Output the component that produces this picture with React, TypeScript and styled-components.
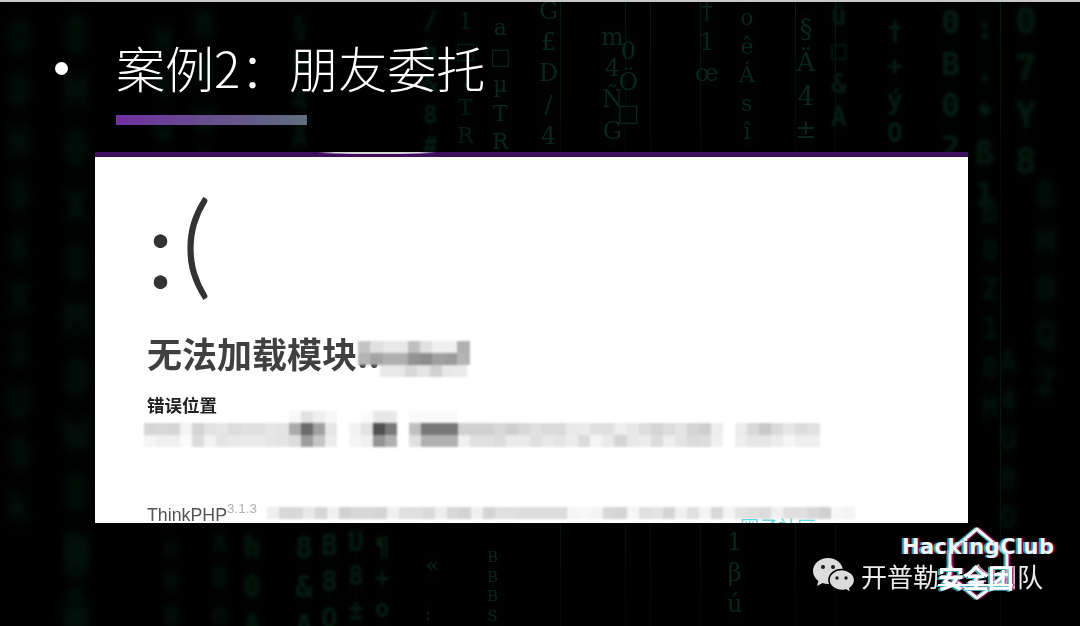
import styled, { createGlobalStyle } from 'styled-components';

const GlobalStyle = createGlobalStyle`
  html, body {
    margin: 0;
    padding: 0;
    background: #000;
  }
`;

const CJK = `"Noto Sans CJK SC", "Noto Sans", sans-serif`;

const Slide = styled.div`
  position: relative;
  width: 1080px;
  height: 626px;
  box-sizing: border-box;
  border-top: 2px solid #c9c9c9;
  background: #000;
  overflow: hidden;
  font-family: ${CJK};
`;

const MatrixLayer = styled.div`
  position: absolute;
  inset: 0;
  overflow: hidden;
`;

const MatrixColumn = styled.div<{ $x: number; $y: number; $size: number; $blur: number; $color: string }>`
  position: absolute;
  left: ${(p) => p.$x}px;
  top: ${(p) => p.$y}px;
  padding: 0 3px;
  font-family: ${(p) => (p.$blur > 0.6 ? '"DejaVu Sans Mono"' : '"DejaVu Serif"')}, monospace;
  font-weight: ${(p) => (p.$blur > 0.6 ? 700 : 400)};
  font-size: ${(p) => p.$size}px;
  line-height: 1.3;
  text-align: center;
  color: ${(p) => p.$color};
  filter: blur(${(p) => p.$blur}px);
  background: linear-gradient(90deg, transparent, rgba(0, 60, 30, 0.05), transparent);
`;

const MatrixGlyph = styled.div`
  display: block;
`;

const Content = styled.div`
  position: relative;
  display: flex;
  flex-direction: column;
`;

const Heading = styled.div`
  display: flex;
  align-items: center;
  margin: 35px 0 0 55px;
  height: 60px;
`;

const Bullet = styled.span`
  width: 13px;
  height: 13px;
  margin: 2px 48px 0 0;
  border-radius: 50%;
  background: #fff;
`;

const Title = styled.h1`
  margin: 0;
  font-size: 49px;
  line-height: 60px;
  font-weight: 300;
  color: #fff;
  white-space: nowrap;
`;

const AccentBar = styled.div`
  width: 191px;
  height: 10px;
  margin: 18px 0 0 116px;
  background: linear-gradient(90deg, #7030a0, #5f6e7e);
`;

const Panel = styled.section`
  position: relative;
  width: 873px;
  height: 371px;
  margin: 27px 0 0 95px;
  background: #fff;
  overflow: hidden;
`;

const PanelTopBar = styled.div`
  position: relative;
  height: 5px;
  background: #3f0e5f;

  &::after {
    content: '';
    position: absolute;
    left: 222px;
    top: -1px;
    width: 120px;
    height: 3px;
    border-radius: 50%;
    background: linear-gradient(90deg, transparent, #d9d3dc 15%, #d9d3dc 85%, transparent);
  }
`;

const PanelBody = styled.div`
  position: relative;
  padding-left: 52px;
`;

const Face = styled.div`
  display: flex;
  margin-top: 16px;
  height: 132px;
  font-family: Lato, "Liberation Sans", sans-serif;
  font-size: 108px;
  line-height: 132px;
  color: #333;
`;

const FaceEyes = styled.span`
  margin-top: 7px;
`;

const FaceMouth = styled.span`
  margin: 2px 0 0 8px;
  font-size: 112px;
  font-weight: 300;
  -webkit-text-stroke: 1.5px #333;
`;

const ErrorTitle = styled.h2`
  position: relative;
  width: max-content;
  margin: 22px 0 0;
  font-size: 35px;
  line-height: 52px;
  font-weight: 700;
  color: #404040;
  filter: blur(0.4px);
`;

const Redaction = styled.div<{ $left: number; $top: number }>`
  position: absolute;
  left: ${(p) => p.$left}px;
  top: ${(p) => p.$top}px;
  filter: blur(0.9px);
`;

const MosaicRow = styled.div<{ $indent?: number }>`
  display: flex;
  margin-left: ${(p) => p.$indent ?? 0}px;
`;

const MosaicCell = styled.span<{ $w: number; $h: number }>`
  flex: none;
  width: ${(p) => p.$w}px;
  height: ${(p) => p.$h}px;
`;

const LocationLabel = styled.h3`
  margin: 14px 0 0;
  font-size: 17.5px;
  line-height: 24px;
  font-weight: 700;
  color: #222;
  filter: blur(0.3px);
`;

const LocationBlur = styled.div`
  margin: -6px 0 0 -3px;
  filter: blur(0.9px);
`;

const Footer = styled.div`
  position: relative;
  display: flex;
  align-items: flex-start;
  margin-top: 60px;
`;

const Brand = styled.span`
  font-family: "Liberation Sans", Arial, sans-serif;
  font-size: 17.8px;
  line-height: 26px;
  color: #555;
  white-space: nowrap;
  margin-top: -5px;
  filter: blur(0.3px);
`;

const Version = styled.sup`
  font-size: 13.500px;
  line-height: 0;
  color: #b0b0b0;
  vertical-align: 8px;
`;

const FooterBlur = styled.div`
  margin: 0 0 0 10px;
  filter: blur(0.9px);
`;

const FooterLink = styled.a`
  position: absolute;
  left: 593px;
  top: 8px;
  display: flex;
  align-items: flex-start;
  gap: 8px;
  font-size: 19px;
  line-height: 24px;
  color: #62d7e2;
  white-space: nowrap;
`;

const LinkTail = styled.span`
  width: 88px;
  margin-top: 9px;
  border-top: 2px dotted #b5ecf0;
`;

const Watermark = styled.div`
  position: absolute;
  left: 813px;
  top: 555px;
  display: flex;
  align-items: center;
  gap: 6px;
`;

const WatermarkText = styled.span`
  font-size: 26px;
  line-height: 38px;
  color: #ebebeb;
  white-space: nowrap;
  filter: blur(0.3px);
`;

const LogoMark = styled.svg`
  position: absolute;
  left: 940px;
  top: 522px;
`;

const LogoName = styled.span`
  position: absolute;
  left: 902px;
  top: 531px;
  font-family: "DejaVu Sans", sans-serif;
  font-weight: 700;
  font-size: 21px;
  line-height: 28px;
  letter-spacing: 0.4px;
  color: #f2f5f8;
  white-space: nowrap;
  text-shadow: -2px 0 0 rgba(70, 200, 215, 0.75), 2px 0 0 rgba(190, 20, 110, 0.5);
`;

const LogoGlitch = styled.span`
  position: absolute;
  left: 938px;
  top: 556px;
  font-size: 26px;
  line-height: 38px;
  font-weight: 700;
  color: #fff;
  white-space: nowrap;
  letter-spacing: -1px;
  text-decoration: underline;
  text-decoration-thickness: 2px;
  text-underline-offset: -4px;
  text-shadow: -2px 1px 0 rgba(70, 200, 215, 0.8), 2px 0 0 rgba(190, 20, 110, 0.55);
  filter: blur(0.4px);
`;

type Column = { x: number; y: number; size: number; blur: number; color: string; text: string };

const SHARP = '#09261a';
const SOFT = '#051c12';
const FAR = '#03130c';

const columns: Column[] = [
  { x: 4, y: 10, size: 40, blur: 5, color: FAR, text: 'O0H8$X1U9k' },
  { x: 60, y: 4, size: 44, blur: 4, color: FAR, text: '8H0X8M0W8N1B' },
  { x: 60, y: 530, size: 44, blur: 5, color: FAR, text: '8W0' },
  { x: 150, y: 16, size: 34, blur: 3.5, color: FAR, text: 'H8O0' },
  { x: 190, y: 0, size: 36, blur: 3.5, color: FAR, text: 'B8W0' },
  { x: 160, y: 530, size: 26, blur: 3, color: FAR, text: 'o80' },
  { x: 208, y: 522, size: 28, blur: 2.5, color: FAR, text: 'x8o' },
  { x: 240, y: 526, size: 30, blur: 2.5, color: SOFT, text: 'h0A8' },
  { x: 288, y: 8, size: 28, blur: 2, color: FAR, text: '§B4A' },
  { x: 292, y: 526, size: 30, blur: 1.8, color: SOFT, text: '8&A8' },
  { x: 318, y: 526, size: 28, blur: 1.8, color: SOFT, text: 'B8O' },
  { x: 345, y: 524, size: 26, blur: 1.5, color: SOFT, text: 'U8±B' },
  { x: 372, y: 530, size: 24, blur: 1.2, color: SOFT, text: '¶+oë' },
  { x: 420, y: 4, size: 24, blur: 1.2, color: SOFT, text: '/h&8#' },
  { x: 422, y: 548, size: 24, blur: 0.4, color: SHARP, text: '«' },
  { x: 422, y: 600, size: 18, blur: 0.4, color: SHARP, text: ':' },
  { x: 452, y: 6, size: 22, blur: 0.6, color: SOFT, text: '1□,TR' },
  { x: 484, y: 546, size: 15, blur: 0.3, color: SHARP, text: 'BBBSZ' },
  { x: 487, y: 12, size: 22, blur: 0.3, color: SHARP, text: 'a□µTR€f' },
  { x: 536, y: -6, size: 24, blur: 0.2, color: SHARP, text: 'G£D/4' },
  { x: 598, y: 20, size: 24, blur: 0.2, color: SHARP, text: 'm4ÑG' },
  { x: 614, y: 34, size: 24, blur: 0.2, color: SHARP, text: '0Ö□' },
  { x: 692, y: -6, size: 24, blur: 0.2, color: SHARP, text: '†1œ' },
  { x: 724, y: 525, size: 24, blur: 0.3, color: SHARP, text: '1βú' },
  { x: 736, y: 2, size: 22, blur: 0.2, color: SHARP, text: 'oêÁsî' },
  { x: 792, y: 10, size: 26, blur: 0.5, color: SHARP, text: '§Ä4±e' },
  { x: 828, y: -2, size: 26, blur: 1, color: SOFT, text: 'ü□&A' },
  { x: 884, y: 14, size: 26, blur: 1, color: SOFT, text: '†+ýO' },
  { x: 938, y: 0, size: 32, blur: 1.5, color: SOFT, text: '0B02' },
  { x: 972, y: 6, size: 32, blur: 2, color: SOFT, text: ':.•ß1' },
  { x: 1012, y: -4, size: 36, blur: 2, color: SOFT, text: '07Y8' },
  { x: 978, y: 190, size: 30, blur: 2.5, color: FAR, text: 'B0Z18H' },
  { x: 1032, y: 170, size: 36, blur: 3, color: FAR, text: '8H0Q2' },
  { x: 996, y: 340, size: 30, blur: 2.5, color: FAR, text: 'A4U8O' },
];

const streaks = [560, 625, 650, 700, 795, 835, 1000];

const Streak = styled.span<{ $x: number }>`
  position: absolute;
  left: ${(p) => p.$x}px;
  top: 0;
  bottom: 0;
  width: 1px;
  background: linear-gradient(180deg, #041a12, #010806 30%, #041a12 70%, #010806);
`;

const grays = (row: string) => row.split(' ').map((v) => (v === '--' ? 'transparent' : `#${v}${v}${v}`));

const locationRows = [
  grays('-- -- -- -- -- -- -- -- -- -- -- -- f8 e2 ee f8 -- -- fb e8 e8 -- fa fa fa fa --'),
  grays(
    'd5 d8 d5 f3 d4 e2 e6 dc e0 e0 e6 e4 aa 6a a0 e6 -- f2 e2 50 7a -- c0 78 78 78 d0 d0 d0 d8 cf d8 e0 da da e8 ea e0 e0 ee e8 dc d4 dc e4 d4 cf ee -- ec d8 c8 da e6 dc e2',
  ),
  grays(
    'f5 f0 f0 fb dc f2 e4 e8 ea ea e6 e4 dc 9c c4 ec -- f5 f0 94 b0 -- e0 b0 b0 b0 f0 e0 e0 dc ea ea e0 e8 e4 ec dc f5 ea d6 e8 ec dc ee e4 da dc f0 -- ee e6 e6 ec f6 ee ee',
  ),
];

const nameRows = [
  { indent: 0, cells: grays('c4 e0 e8 e8 c0 e0 f0 f0 b0') },
  { indent: 0, cells: grays('b4 a4 b0 b0 92 8c a0 9c b4') },
  { indent: 22, cells: grays('e8 e8 d8 e4 d0 e8 ea') },
];

const footerCells = grays(
  'ef d8 d8 e8 d6 f0 d0 d8 d8 d4 f0 e0 e0 da ee d8 d4 f0 d4 e0 e0 dc dc dc dc f6 f8 f4 d8 d4 f6 e0 e4 d6 f0 e0 f4 d8 f4 e4 e0 dc f0 e0 e0 d8 d0 f8 f4',
);

const WeChatIcon = () => (
  <svg width="42" height="36" viewBox="0 0 42 36">
    <path
      d="M15 0C6.7 0 0 5.8 0 13c0 4 2.1 7.6 5.4 10L4 28l5.6-2.9c1.7.6 3.5.9 5.4.9 8.3 0 15-5.8 15-13S23.300 0 15 0z"
      fill="#dcdcdc"
    />
    <path
      d="M28.500 11.500C21.600 11.500 16 16.200 16 22s5.600 10.500 12.500 10.500c1.500 0 2.900-.2 4.200-.6L38 35l-1.100-4.700c2.900-1.900 4.800-4.900 4.800-8.300 0-5.800-6.300-10.500-13.200-10.500z"
      fill="#dcdcdc"
      stroke="#000"
      strokeWidth="1.600"
    />
    <circle cx="10" cy="9" r="2" fill="#1c1c1c" />
    <circle cx="20" cy="9" r="2" fill="#1c1c1c" />
    <circle cx="24" cy="20" r="1.700" fill="#1c1c1c" />
    <circle cx="33" cy="20" r="1.700" fill="#1c1c1c" />
  </svg>
);

const HexMark = () => (
  <LogoMark width="76" height="80" viewBox="0 0 76 80" fill="none" strokeWidth="3">
    <path d="M35 5 L65 30 L65 52 L35 74 L8 52 L8 28 Z" stroke="#46c8d7" opacity="0.8" />
    <path d="M39 5 L69 30 L69 52 L39 74 L12 52 L12 28 Z" stroke="#be146e" opacity="0.75" />
    <path d="M37 5 L67 30 L67 52 L37 74 L10 52 L10 28 Z" stroke="#f4f4f4" />
  </LogoMark>
);

export default function App() {
  return (
    <Slide>
      <GlobalStyle />
      <MatrixLayer>
        {streaks.map((x) => (
          <Streak key={x} $x={x} />
        ))}
        {columns.map((c) => (
          <MatrixColumn key={`${c.x}-${c.y}`} $x={c.x} $y={c.y} $size={c.size} $blur={c.blur} $color={c.color}>
            {Array.from(c.text).map((glyph, i) => (
              <MatrixGlyph key={i}>{glyph}</MatrixGlyph>
            ))}
          </MatrixColumn>
        ))}
      </MatrixLayer>

      <Content>
        <Heading>
          <Bullet />
          <Title>案例2：朋友委托</Title>
        </Heading>
        <AccentBar />

        <Panel>
          <PanelTopBar />
          <PanelBody>
            <Face>
              <FaceEyes>:</FaceEyes>
              <FaceMouth>(</FaceMouth>
            </Face>
            <ErrorTitle>
              无法加载模块...
              <Redaction $left={211} $top={14}>
                {nameRows.map((row, i) => (
                  <MosaicRow key={i} $indent={row.indent}>
                    {row.cells.map((color, j) => (
                      <MosaicCell key={j} $w={12.400} $h={12} style={{ background: color }} />
                    ))}
                  </MosaicRow>
                ))}
              </Redaction>
            </ErrorTitle>
            <LocationLabel>错误位置</LocationLabel>
            <LocationBlur>
              {locationRows.map((row, i) => (
                <MosaicRow key={i}>
                  {row.map((color, j) => (
                    <MosaicCell key={j} $w={12.070} $h={12} style={{ background: color }} />
                  ))}
                </MosaicRow>
              ))}
            </LocationBlur>
            <Footer>
              <Brand>
                ThinkPHP<Version>3.1.3</Version>
              </Brand>
              <FooterBlur>
                <MosaicRow>
                  {footerCells.map((color, j) => (
                    <MosaicCell key={j} $w={12} $h={12} style={{ background: color }} />
                  ))}
                </MosaicRow>
              </FooterBlur>
              <FooterLink>
                圈子社区
                <LinkTail />
              </FooterLink>
            </Footer>
          </PanelBody>
        </Panel>
      </Content>

      <Watermark>
        <WeChatIcon />
        <WatermarkText>开普勒安全团队</WatermarkText>
      </Watermark>
      <HexMark />
      <LogoName>HackingClub</LogoName>
      <LogoGlitch>安全团</LogoGlitch>
    </Slide>
  );
}
